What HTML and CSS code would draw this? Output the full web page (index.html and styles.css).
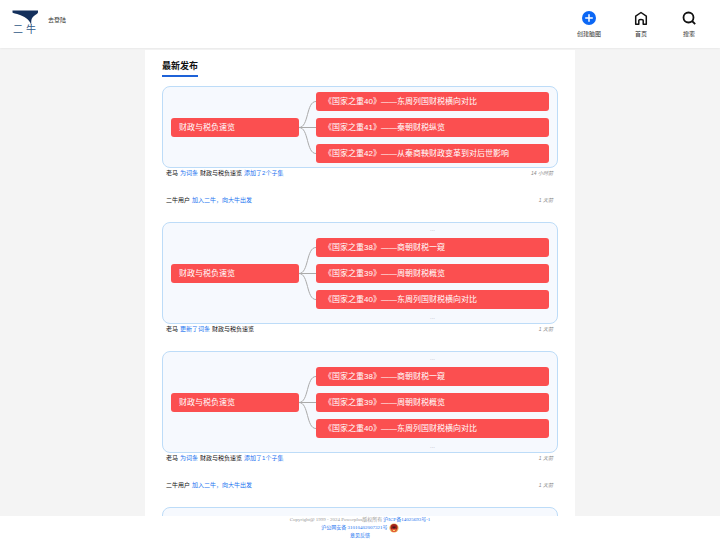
FILE: index.html
```
<!doctype html>
<html lang="zh-CN">
<head>
<meta charset="utf-8">
<meta name="viewport" content="width=device-width, initial-scale=1">
<title>二牛</title>
<link rel="stylesheet" href="styles.css">
</head>
<body>
<header>
    <a class="logo" href="#" aria-label="二牛">
        <svg width="28" height="28" viewBox="0 0 28 28">
            <path d="M0.500 2.500H26V4.500C25.500 6 22 7.500 20.500 9.500C19 11.500 19 14 19.500 18C18.500 13 14.500 9.500 8 7C4 5.500 1 5.500 0.500 4.500Z" fill="#14305c"/>
            <text x="1" y="25">二</text>
            <text x="14" y="25">牛</text>
        </svg>
    </a>
    <a class="login" href="#">去登陆</a>
    <nav>
        <a href="#">
            <svg width="16" height="16" viewBox="0 0 16 16">
                <circle cx="8" cy="8" r="7" fill="#0b67f5"/>
                <path d="M8 4.200V11.800M4.200 8H11.800" stroke="#fff" stroke-width="1.500"/>
            </svg>
            创建脑图
        </a>
        <a href="#">
            <svg width="16" height="16" viewBox="0 0 16 16" fill="none" stroke="#111" stroke-width="1.500" stroke-linejoin="round">
                <path d="M2.700 6.200L8 2.500L13.300 6.200V14.200H10.200V10.500C10.200 9 5.800 9 5.800 10.500V14.200H2.700Z"/>
            </svg>
            首页
        </a>
        <a href="#">
            <svg width="16" height="16" viewBox="0 0 16 16" fill="none" stroke="#111" stroke-width="1.800">
                <circle cx="7.500" cy="7.500" r="5"/>
                <path d="M11 11L14.200 14.200"/>
            </svg>
            搜索
        </a>
    </nav>
</header>
<main>
    <div class="feed">
        <h1>最新发布</h1>
        <article>
            <div class="card">
                <div class="node">财政与税负速览</div>
                <svg class="lines" width="17" height="71" viewBox="0 0 17 71">
                    <path d="M0 35.500H17M0 35.500C10 35.500 7 9.500 17 9.500M0 35.500C10 35.500 7 61.500 17 61.500"/>
                </svg>
                <div class="children">
                    <div class="node">《国家之重40》——东周列国财税横向对比</div>
                    <div class="node">《国家之重41》——秦朝财税纵览</div>
                    <div class="node">《国家之重42》——从秦商鞅财政变革到对后世影响</div>
                </div>
            </div>
            <p>老马 <a href="#">为词条</a> 财政与税负速览 <a href="#">添加了2个子集</a> <time>14 小时前</time></p>
        </article>
        <article>
            <p>二牛用户 <a href="#">加入二牛，向大牛出发</a> <time>1 天前</time></p>
        </article>
        <article>
            <div class="card">
                <div class="node">财政与税负速览</div>
                <svg class="lines" width="17" height="71" viewBox="0 0 17 71">
                    <path d="M0 35.500H17M0 35.500C10 35.500 7 9.500 17 9.500M0 35.500C10 35.500 7 61.500 17 61.500"/>
                </svg>
                <div class="children">
                    <div class="more">...</div>
                    <div class="node">《国家之重38》——商朝财税一窥</div>
                    <div class="node">《国家之重39》——周朝财税概览</div>
                    <div class="node">《国家之重40》——东周列国财税横向对比</div>
                    <div class="more">...</div>
                </div>
            </div>
            <p>老马 <a href="#">更新了词条</a> 财政与税负速览 <time>1 天前</time></p>
        </article>
        <article>
            <div class="card">
                <div class="node">财政与税负速览</div>
                <svg class="lines" width="17" height="71" viewBox="0 0 17 71">
                    <path d="M0 35.500H17M0 35.500C10 35.500 7 9.500 17 9.500M0 35.500C10 35.500 7 61.500 17 61.500"/>
                </svg>
                <div class="children">
                    <div class="more">...</div>
                    <div class="node">《国家之重38》——商朝财税一窥</div>
                    <div class="node">《国家之重39》——周朝财税概览</div>
                    <div class="node">《国家之重40》——东周列国财税横向对比</div>
                    <div class="more">...</div>
                </div>
            </div>
            <p>老马 <a href="#">为词条</a> 财政与税负速览 <a href="#">添加了1个子集</a> <time>1 天前</time></p>
        </article>
        <article>
            <p>二牛用户 <a href="#">加入二牛，向大牛出发</a> <time>1 天前</time></p>
        </article>
        <article>
            <div class="card"></div>
        </article>
    </div>
</main>
<footer>
    <div>Copyright@ 1999 - 2024 Powerplus版权所有 <a href="#">沪ICP备14025693号-1</a></div>
    <div>
        <a href="#">沪公网安备 31010402007321号</a>
        <svg width="10" height="10" viewBox="0 0 10 10">
            <circle cx="5" cy="5" r="4.600" fill="#e9b35c"/>
            <circle cx="5" cy="4.500" r="3.500" fill="#a3201b"/>
            <path d="M2 6.500L3.500 5.500H6.500L8 6.500L6.500 9H3.500Z" fill="#e4573a"/>
            <path d="M3.500 3.500H6.500V5.500H3.500Z" fill="#401a18"/>
            <path d="M4 7.500H6" stroke="#ffd76a"/>
        </svg>
    </div>
    <div><a href="#">意见反馈</a></div>
</footer>
</body>
</html>
```

FILE: styles.css
```
html, body {
    margin: 0;
    padding: 0;
    height: 100%;
}
body {
    display: flex;
    flex-direction: column;
    font-family: "Liberation Sans", "Noto Sans CJK SC", sans-serif;
    font-size: 6px;
    line-height: 10px;
    color: #111;
    background: #f4f4f4;
}
a {
    color: #1a73f0;
    text-decoration: none;
}
svg {
    display: block;
    flex: none;
}
header {
    display: flex;
    align-items: center;
    flex: none;
    height: 48px;
    box-sizing: border-box;
    padding: 0 23px 0 12px;
    background: #fff;
    box-shadow: 0 0 2px #ddd;
}
.logo {
    margin-top: -4px;
    margin-right: 8px;
}
.logo text {
    font-family: "Noto Sans CJK SC", sans-serif;
    font-size: 10px;
    fill: #315a88;
}
.login {
    margin-top: -8px;
    color: #333;
}
nav {
    display: flex;
    gap: 32px;
    margin-left: auto;
}
nav a {
    display: flex;
    flex-direction: column;
    align-items: center;
    gap: 3px;
    color: #333;
}
main {
    flex: 1;
    min-height: 0;
    overflow-y: auto;
    scrollbar-width: none;
    padding-top: 2px;
}
.feed {
    max-width: 396px;
    margin: 0 auto;
    padding: 9px 17px;
    background: #fff;
}
h1 {
    width: fit-content;
    margin: 0 0 9px;
    padding-bottom: 2px;
    border-bottom: 2px solid #1e62d8;
    font-size: 9px;
    line-height: 14px;
}
article {
    margin-bottom: 17px;
}
.card {
    display: grid;
    grid-template-columns: 128px 17px 1fr;
    align-items: center;
    min-height: 71px;
    padding: 5px 8px 4px;
    border: 1px solid #bddcf8;
    border-radius: 8px;
    background: #f6f9fe;
}
.node {
    padding: 0 8px;
    border-radius: 3px;
    background: #fb4f50;
    color: #fff;
    font-size: 8px;
    line-height: 19px;
    white-space: nowrap;
}
.children {
    display: grid;
    gap: 7px;
}
.more {
    height: 3px;
    color: #aab;
    font-size: 6px;
    line-height: 3px;
    text-align: center;
}
.lines path {
    fill: none;
    stroke: #aaa;
    stroke-width: 1;
}
p {
    display: flex;
    gap: 2px;
    margin: 0;
    padding: 0 5px 0 4px;
}
time {
    margin-left: auto;
    color: #888;
    font-size: 5px;
    font-style: italic;
}
footer {
    flex: none;
    background: #fff;
    color: #999;
    font-family: "Liberation Serif", "Noto Sans CJK SC", serif;
    font-size: 5px;
    line-height: 8px;
    text-align: center;
}
footer div {
    display: flex;
    justify-content: center;
    align-items: center;
    gap: 1px;
    height: 8px;
}
```
